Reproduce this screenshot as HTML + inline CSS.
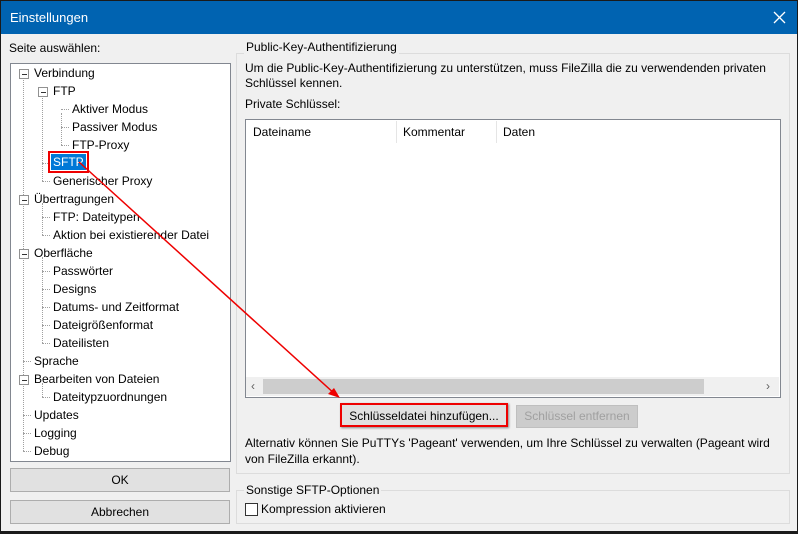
<!DOCTYPE html>
<html><head><meta charset="utf-8"><style>
body{margin:0;width:798px;height:534px;overflow:hidden;background:#1a1a1a;font-family:"Liberation Sans",sans-serif;font-size:12px;color:#000}
.win{position:absolute;left:1px;top:1px;width:796px;height:530px;background:#f0f0f0;border:0}
.title{position:absolute;left:0;top:0;width:796px;height:33px;background:#0063b1;color:#fff;font-size:13px}
.a{position:absolute;white-space:nowrap}
.tree{position:absolute;left:9px;top:62px;width:219px;height:397px;background:#fff;border:1px solid #828790}
.btn{position:absolute;background:#e1e1e1;border:1px solid #adadad;text-align:center;box-sizing:border-box}
.grp{position:absolute;border:1px solid #dcdcdc;box-sizing:border-box}
.dv{position:absolute;border-left:1px dotted #a0a0a0}
.dh{position:absolute;border-top:1px dotted #a0a0a0;width:8px}
.box{position:absolute;width:8px;height:8px;border:1px solid #919191;background:#fff}
.box:after{content:"";position:absolute;left:2px;top:4px;width:5px;height:1px;background:#333}
</style></head><body>
<div class="win">
<div class="title"><span class="a" style="left:9px;top:9px">Einstellungen</span>
<svg class="a" style="left:772px;top:10px" width="13" height="13"><path d="M1 1L12 12M12 1L1 12" stroke="#fff" stroke-width="1.3"/></svg></div>
<span class="a" style="left:8px;top:40px">Seite auswählen:</span>
<div class="tree"></div>
<!-- tree lines -->
<div class="dv" style="left:22px;top:76px;height:374px"></div>
<div class="dv" style="left:41px;top:94px;height:86px"></div>
<div class="dv" style="left:60px;top:112px;height:32px"></div>
<div class="dv" style="left:41px;top:202px;height:32px"></div>
<div class="dv" style="left:41px;top:256px;height:86px"></div>
<div class="dv" style="left:41px;top:382px;height:14px"></div>
<div class="dh" style="left:60px;top:108px"></div><div class="dh" style="left:60px;top:126px"></div><div class="dh" style="left:60px;top:144px"></div>
<div class="dh" style="left:41px;top:162px"></div><div class="dh" style="left:41px;top:180px"></div>
<div class="dh" style="left:41px;top:216px"></div><div class="dh" style="left:41px;top:234px"></div>
<div class="dh" style="left:41px;top:270px"></div><div class="dh" style="left:41px;top:288px"></div><div class="dh" style="left:41px;top:306px"></div><div class="dh" style="left:41px;top:324px"></div><div class="dh" style="left:41px;top:342px"></div>
<div class="dh" style="left:41px;top:396px"></div>
<div class="dh" style="left:22px;top:360px"></div><div class="dh" style="left:22px;top:414px"></div><div class="dh" style="left:22px;top:432px"></div><div class="dh" style="left:22px;top:450px"></div>
<div class="box" style="left:18px;top:68px"></div>
<div class="box" style="left:37px;top:86px"></div>
<div class="box" style="left:18px;top:194px"></div>
<div class="box" style="left:18px;top:248px"></div>
<div class="box" style="left:18px;top:374px"></div>
<span class="a" style="left:33px;top:65px">Verbindung</span>
<span class="a" style="left:52px;top:83px">FTP</span>
<span class="a" style="left:71px;top:101px">Aktiver Modus</span>
<span class="a" style="left:71px;top:119px">Passiver Modus</span>
<span class="a" style="left:71px;top:137px">FTP-Proxy</span>
<span class="a" style="left:50px;top:153px;background:#0078d7;color:#fff;padding:1px 2px;outline:2px solid #e00;outline-offset:1px">SFTP</span>
<span class="a" style="left:52px;top:173px">Generischer Proxy</span>
<span class="a" style="left:33px;top:191px">Übertragungen</span>
<span class="a" style="left:52px;top:209px">FTP: Dateitypen</span>
<span class="a" style="left:52px;top:227px">Aktion bei existierender Datei</span>
<span class="a" style="left:33px;top:245px">Oberfläche</span>
<span class="a" style="left:52px;top:263px">Passwörter</span>
<span class="a" style="left:52px;top:281px">Designs</span>
<span class="a" style="left:52px;top:299px">Datums- und Zeitformat</span>
<span class="a" style="left:52px;top:317px">Dateigrößenformat</span>
<span class="a" style="left:52px;top:335px">Dateilisten</span>
<span class="a" style="left:33px;top:353px">Sprache</span>
<span class="a" style="left:33px;top:371px">Bearbeiten von Dateien</span>
<span class="a" style="left:52px;top:389px">Dateitypzuordnungen</span>
<span class="a" style="left:33px;top:407px">Updates</span>
<span class="a" style="left:33px;top:425px">Logging</span>
<span class="a" style="left:33px;top:443px">Debug</span>
<div class="btn" style="left:9px;top:467px;width:220px;height:24px;line-height:22px">OK</div>
<div class="btn" style="left:9px;top:499px;width:220px;height:24px;line-height:22px">Abbrechen</div>
<div class="grp" style="left:235px;top:52px;width:554px;height:421px"></div>
<span class="a" style="left:243px;top:39px;background:#f0f0f0;padding:0 2px">Public-Key-Authentifizierung</span>
<span class="a" style="left:244px;top:60px">Um die Public-Key-Authentifizierung zu unterstützen, muss FileZilla die zu verwendenden privaten</span>
<span class="a" style="left:244px;top:75px">Schlüssel kennen.</span>
<span class="a" style="left:244px;top:96px">Private Schlüssel:</span>
<div class="a" style="left:244px;top:118px;width:534px;height:277px;background:#fff;border:1px solid #828790"></div>
<div class="a" style="left:395px;top:120px;width:1px;height:22px;background:#e5e5e5"></div>
<div class="a" style="left:495px;top:120px;width:1px;height:22px;background:#e5e5e5"></div>
<span class="a" style="left:252px;top:124px">Dateiname</span>
<span class="a" style="left:402px;top:124px">Kommentar</span>
<span class="a" style="left:502px;top:124px">Daten</span>
<div class="a" style="left:245px;top:376px;width:533px;height:19px;background:#f0f0f0"></div>
<div class="a" style="left:262px;top:378px;width:441px;height:15px;background:#cdcdcd"></div>
<span class="a" style="left:250px;top:378px;color:#606060;font-size:12px">&lsaquo;</span>
<span class="a" style="left:765px;top:378px;color:#606060">&rsaquo;</span>
<div class="btn" style="left:339px;top:402px;width:168px;height:24px;line-height:22px;border:2px solid #e00;box-shadow:1px 1px 2px #888">Schlüsseldatei hinzufügen...</div>
<div class="btn" style="left:515px;top:404px;width:122px;height:23px;line-height:21px;color:#a0a0a0;background:#ccc;border-color:#bfbfbf">Schlüssel entfernen</div>
<span class="a" style="left:244px;top:435px">Alternativ können Sie PuTTYs 'Pageant' verwenden, um Ihre Schlüssel zu verwalten (Pageant wird</span>
<span class="a" style="left:244px;top:451px">von FileZilla erkannt).</span>
<div class="grp" style="left:235px;top:489px;width:554px;height:34px"></div>
<span class="a" style="left:243px;top:482px;background:#f0f0f0;padding:0 2px">Sonstige SFTP-Optionen</span>
<div class="a" style="left:244px;top:502px;width:11px;height:11px;border:1px solid #333;background:#fff"></div>
<span class="a" style="left:260px;top:501px">Kompression aktivieren</span>
</div>
<svg class="a" style="left:0;top:0" width="798" height="534"><line x1="79" y1="162" x2="336" y2="395" stroke="#e00" stroke-width="1.5"/><path d="M340 398L328 394L334 388Z" fill="#e00"/></svg>
</body></html>
